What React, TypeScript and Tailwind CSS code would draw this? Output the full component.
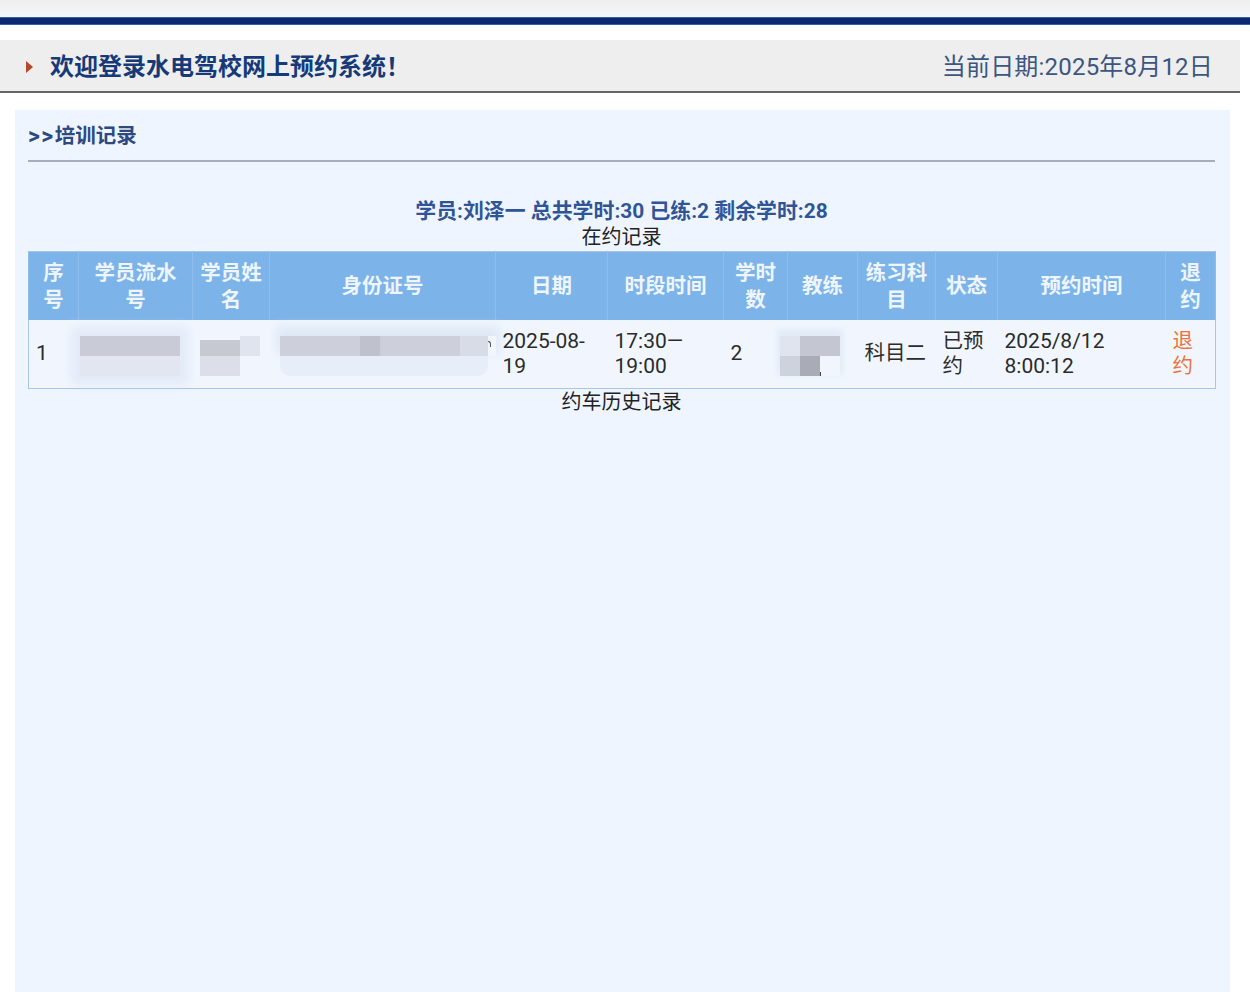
const font = { fontFamily: 'Roboto, "Noto Sans CJK SC", sans-serif' };

const columns = [
  { title: "序号", width: "w-[50px]" },
  { title: "学员流水号", width: "w-[114px]" },
  { title: "学员姓名", width: "w-[77px]" },
  { title: "身份证号", width: "w-[226px]" },
  { title: "日期", width: "w-[112px]" },
  { title: "时段时间", width: "w-[116px]" },
  { title: "学时数", width: "w-[64px]" },
  { title: "教练", width: "w-[70px]" },
  { title: "练习科目", width: "w-[78px]" },
  { title: "状态", width: "w-[62px]" },
  { title: "预约时间", width: "w-[168px]" },
  { title: "退约", width: "w-[50px]" },
];

// one mosaic square of the masked personal data
const Tile = ({ className }: { className: string }) => <div className={`h-5 ${className}`} />;

const numberCell = "pl-[7px] pr-1 align-middle text-[21px] leading-[25px]";
const textCell = "pl-[7px] pr-0 align-middle text-[20.5px] leading-[25px]";

export default function App() {
  return (
    <div className="h-[992px] w-[1250px] overflow-hidden bg-white" style={font}>
      <div className="h-[17px] bg-gradient-to-b from-[#eeeeee] to-[#f6f7f8]" />
      <div className="h-2 border-y border-y-[#3560a8] bg-[#0b2870]" />

      <div className="mt-[15px] flex h-[53px] w-[1240px] items-center justify-between border-b-2 border-b-[#666666] bg-[#eeeeee] pl-[26px] pr-[27px] pt-[2px]">
        <div className="flex items-center gap-[17px]">
          <span className="h-0 w-0 border-y-[6px] border-l-[7px] border-y-transparent border-l-[#b5472a]" />
          <h1 className="text-[24px] font-bold leading-none text-[#163a78]">欢迎登录水电驾校网上预约系统！</h1>
        </div>
        <div className="text-[24px] leading-none tracking-[0.2px] text-[#3c5680]">当前日期:2025年8月12日</div>
      </div>

      <div className="ml-[15px] mt-[17px] h-[882px] w-[1215px] bg-[#eff5ff] pl-[13px] pr-[15px]">
        <div className="flex h-[50px] items-center pt-[2px] text-[20.5px] font-bold leading-none text-[#2d4a80]">
          <span className="text-[23px] tracking-[1.5px]">&gt;&gt;</span>
          培训记录
        </div>
        <div className="h-[2px] bg-[#a9adbb]" />

        <div className="mt-[36px] text-center text-[20.9px] font-bold leading-[26px] text-[#2f5597]">
          学员:刘泽一 总共学时:30 已练:2 剩余学时:28
        </div>
        <div className="text-center text-[20px] leading-[27px] text-[#222222]">在约记录</div>

        <table className="w-[1187px] table-fixed border-collapse border border-[#a9c6e6]">
          <thead>
            <tr className="h-[68px] bg-[#7cb3e9]">
              {columns.map((col) => (
                <th
                  key={col.title}
                  className={`${col.width} border-x border-x-[#8fbeed] px-[7px] pt-[2px] text-center text-[20.5px] font-bold leading-[27px] text-[#eef5fd]`}
                >
                  {col.title}
                </th>
              ))}
            </tr>
          </thead>
          <tbody>
            <tr className="h-[69px] bg-[#f1f6fe] text-[#2b2b2b]">
              <td className={numberCell}>1</td>

              <td className="pl-[1px]">
                <div className="mt-1 flex w-[100px] flex-col shadow-[0_0_10px_9px_#e3ebf7]">
                  <Tile className="bg-[#c9cbd6]" />
                  <Tile className="bg-[#e2e6f0]" />
                </div>
              </td>

              <td className="pl-[7px]">
                <div className="mt-1 flex">
                  <div className="flex w-10 flex-col">
                    <div className="mt-1 h-4 bg-[#c6c8d2]" />
                    <Tile className="bg-[#dcdfe9]" />
                  </div>
                  <Tile className="w-5 bg-[#e0e4ee]" />
                </div>
              </td>

              <td className="pl-[10px]">
                <div className="mt-1 flex flex-col">
                  <div className="flex items-start shadow-[0_-6px_10px_4px_#dfe9f6]">
                    <Tile className="w-20 bg-[#cdd0da]" />
                    <Tile className="w-5 bg-[#bfc1cc]" />
                    <Tile className="w-20 bg-[#cdd0da]" />
                    <Tile className="w-7 bg-[#d7dce6]" />
                    <div className="mt-[5px] h-[6px] w-[3px] rounded-tr-[3px] border-r border-t border-[#555555]" />
                  </div>
                  <Tile className="w-[208px] rounded-b-[10px] bg-[#e7eef9]" />
                </div>
              </td>

              <td className={numberCell}>2025-08-19</td>
              <td className={numberCell}>17:30—19:00</td>
              <td className={numberCell}>2</td>

              <td>
                <div className="-ml-[8px] mt-1 flex w-[60px] flex-wrap items-end shadow-[0_-4px_6px_3px_#e3ebf7]">
                  <Tile className="w-5 bg-[#dfe4ee]" />
                  <Tile className="w-10 bg-[#c4c7d2]" />
                  <Tile className="w-5 bg-[#ced2dd]" />
                  <Tile className="w-5 bg-[#a9abb7]" />
                  <div className="h-[4px] w-[1px] bg-[#444444]" />
                </div>
              </td>

              <td className={textCell}>科目二</td>
              <td className={textCell}>已预约</td>
              <td className={numberCell}>2025/8/12 8:00:12</td>
              <td className={`${textCell} pr-[12px] text-[#e8743c]`}>退约</td>
            </tr>
          </tbody>
        </table>

        <div className="text-center text-[20px] leading-[26px] text-[#222222]">约车历史记录</div>
      </div>
    </div>
  );
}
